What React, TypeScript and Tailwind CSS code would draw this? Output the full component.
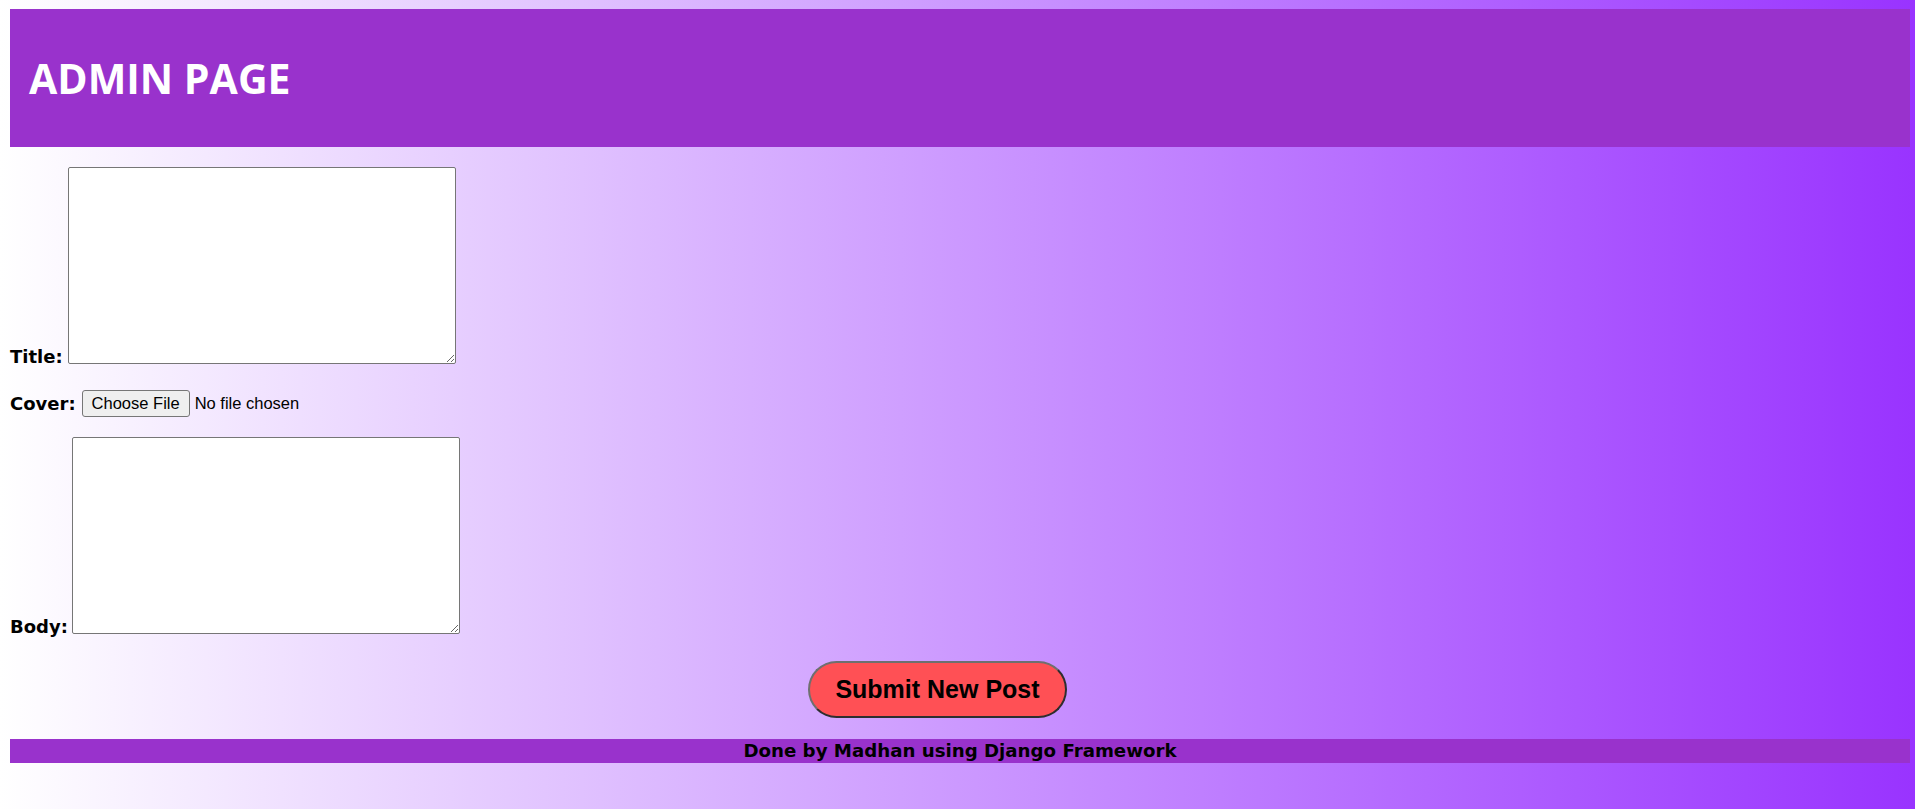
import React from "react";

const labelFont = { fontFamily: '"DejaVu Sans", Verdana, sans-serif' };

const Field = ({ label, gap }: { label: string; gap: string }) => (
  <div className={`flex items-end ${gap}`}>
    <label
      className="text-[18px] font-bold leading-[14px] text-black"
      style={labelFont}
    >
      {label}
    </label>
    <textarea className="h-[197px] w-[388px] rounded-[2px] border border-[#767676] bg-white" />
  </div>
);

const App = () => {
  return (
    <div className="min-h-screen bg-[linear-gradient(to_right,#ffffff,#9933ff)] pl-[10px] pr-[5px] pt-[9px]">
      <header className="flex h-[138px] items-center bg-[#9932cc] pl-[19px]">
        <h1 className="font-['Open_Sans',sans-serif] text-[41px] font-bold leading-none text-white">
          ADMIN PAGE
        </h1>
      </header>

      <form onSubmit={(e) => e.preventDefault()}>
        <div className="mt-[20px]">
          <Field label="Title:" gap="gap-[5px]" />
        </div>

        <div className="mt-[26px] flex h-[27px] items-center">
          <label className="text-[18px] font-bold text-black" style={labelFont}>
            Cover:
          </label>
          <button
            type="button"
            className="ml-[6px] h-[27px] rounded-[3px] border border-[#767676] bg-[#efefef] px-[9px] font-['Liberation_Sans',Arial,sans-serif] text-[16.5px] text-black"
          >
            Choose File
          </button>
          <span className="ml-[5px] font-['Liberation_Sans',Arial,sans-serif] text-[16.5px] text-black">
            No file chosen
          </span>
        </div>

        <div className="mt-[20px]">
          <Field label="Body:" gap="gap-[4px]" />
        </div>

        <div className="mt-[27px]">
          <button
            type="submit"
            className="ml-[798px] flex h-[57px] w-[259px] items-center justify-center rounded-full border-2 border-t-[#6f6f6f] border-l-[#6f6f6f] border-r-[#2e2e2e] border-b-[#2e2e2e] bg-[#ff5055] font-['Liberation_Sans',Arial,sans-serif] text-[25px] font-bold text-black"
          >
            Submit New Post
          </button>
        </div>
      </form>

      <footer
        className="mt-[21px] h-[24px] bg-[#9932cc] text-center text-[18.2px] font-bold leading-[24px] text-black"
        style={labelFont}
      >
        Done by Madhan using Django Framework
      </footer>
    </div>
  );
};

export default App;
